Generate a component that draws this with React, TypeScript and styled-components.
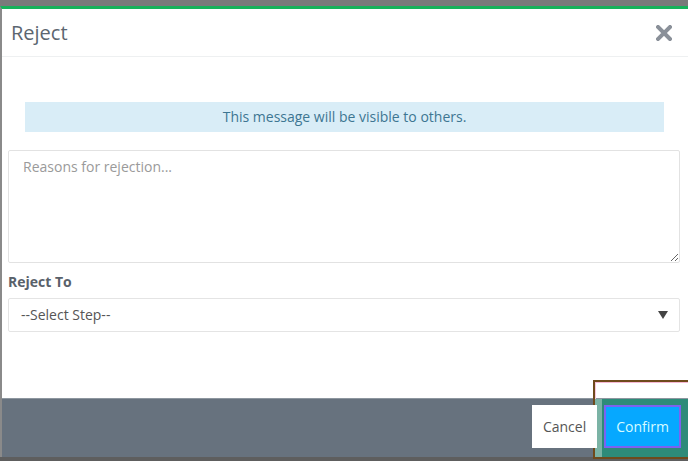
import styled, { createGlobalStyle } from 'styled-components';

const GlobalStyle = createGlobalStyle`
  html, body {
    margin: 0;
    padding: 0;
  }
  body {
    font-family: 'Open Sans', 'Liberation Sans', Arial, sans-serif;
    background: #5e5e5e;
  }
  * {
    box-sizing: border-box;
  }
`;

const Page = styled.div`
  position: relative;
  width: 688px;
  height: 461px;
  padding-top: 6px;
  display: flex;
  flex-direction: column;
  background: linear-gradient(#7a7a7a 0 20px, #5e5e5e 20px);
  overflow: hidden;
`;

const Modal = styled.div`
  height: 451px;
  display: flex;
  flex-direction: column;
  background: #fff;
  border-top: 3px solid #17b25a;
  border-left: 2px solid #8a8a8a;
`;

const Header = styled.div`
  height: 48px;
  padding: 0 16px 0 9px;
  display: flex;
  align-items: center;
  justify-content: space-between;
  border-bottom: 1px solid #eef0f1;
`;

const Title = styled.h4`
  margin: 0;
  font-size: 20px;
  font-weight: 400;
  color: #5c6670;
`;

const CloseButton = styled.button`
  border: 0;
  background: none;
  padding: 0;
  width: 16px;
  height: 16px;
  display: flex;
  cursor: pointer;
`;

const Body = styled.div`
  flex: 1;
  padding: 45px 8px 0 6px;
  display: flex;
  flex-direction: column;
`;

const Alert = styled.div`
  margin: 0 16px 18px 17px;
  height: 30px;
  padding-bottom: 1px;
  display: flex;
  align-items: center;
  justify-content: center;
  background: #d9edf7;
  color: #3d7692;
  font-size: 14px;
`;

const TextArea = styled.textarea`
  width: 100%;
  height: 113px;
  padding: 6px 14px;
  border: 1px solid #e2e2e2;
  border-radius: 2px;
  font-family: inherit;
  font-size: 14px;
  color: #555;
  resize: vertical;
  outline: none;

  &::placeholder {
    color: #9a9a9a;
  }
`;

const Label = styled.label`
  display: block;
  margin: 9px 0 6px;
  line-height: 20px;
  font-size: 14px;
  font-weight: 700;
  color: #59616a;
`;

const SelectBox = styled.div`
  height: 34px;
  padding: 0 11px 2px 12px;
  display: flex;
  align-items: center;
  justify-content: space-between;
  border: 1px solid #e4e4e4;
  border-radius: 2px;
  font-size: 14px;
  color: #555;
`;

const Caret = styled.span`
  margin-top: 2px;
  width: 0;
  height: 0;
  border-left: 5px solid transparent;
  border-right: 5px solid transparent;
  border-top: 8px solid #444;
`;

const Footer = styled.div`
  height: 59px;
  padding: 6px 7px;
  display: flex;
  justify-content: flex-end;
  align-items: flex-start;
  gap: 7px;
  background: #67727e;
  border-top: 1px solid #8d969f;
`;

const Button = styled.button<{ $primary?: boolean }>`
  position: relative;
  z-index: 2;
  height: 43px;
  padding: 0 ${p => (p.$primary ? '12px' : '11px')};
  border: 0;
  font-family: inherit;
  font-size: 14px;
  cursor: pointer;
  background: ${p => (p.$primary ? '#06a8ff' : '#fff')};
  color: ${p => (p.$primary ? '#d6fbff' : '#555')};
  box-shadow: ${p => (p.$primary ? 'inset 0 0 0 2px #7c62f0' : 'none')};
`;

const Highlight = styled.div`
  position: absolute;
  z-index: 1;
  left: 593px;
  top: 380px;
  width: 97px;
  height: 79px;
  border: 2px solid #6f4a1c;
  display: flex;
  flex-direction: column;
  pointer-events: none;
`;

const HighlightTop = styled.div`
  height: 17px;
  border-top: 1px solid #f7b8d4;
  border-left: 1px solid #f7c8dc;
`;

const HighlightBottom = styled.div`
  flex: 1;
  background: rgba(8, 156, 119, 0.6);
  border-left: 7px solid rgba(200, 220, 210, 0.5);
`;

export default function App() {
  return (
    <>
      <GlobalStyle />
      <Page>
        <Modal>
          <Header>
            <Title>Reject</Title>
            <CloseButton aria-label="Close">
              <svg width="16" height="16" viewBox="0 0 16 16">
                <path d="M2 2 L14 14 M14 2 L2 14" stroke="#8a9099" strokeWidth="4" strokeLinecap="square" />
              </svg>
            </CloseButton>
          </Header>
          <Body>
            <Alert>This message will be visible to others.</Alert>
            <TextArea placeholder="Reasons for rejection..." />
            <Label>Reject To</Label>
            <SelectBox>
              <span>--Select Step--</span>
              <Caret />
            </SelectBox>
          </Body>
          <Footer>
            <Button>Cancel</Button>
            <Button $primary>Confirm</Button>
          </Footer>
        </Modal>
        <Highlight>
          <HighlightTop />
          <HighlightBottom />
        </Highlight>
      </Page>
    </>
  );
}
